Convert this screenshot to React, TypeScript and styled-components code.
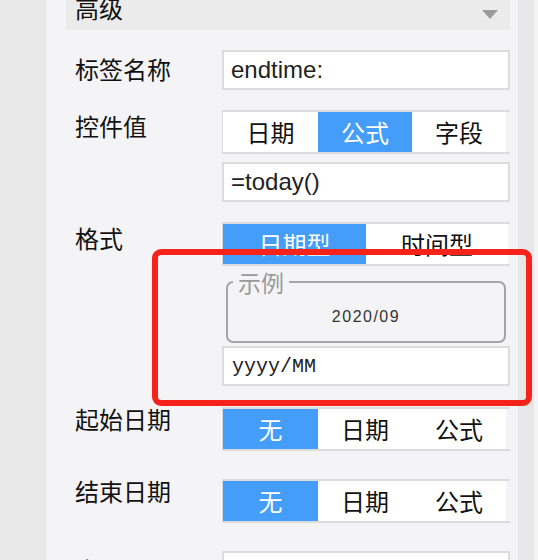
import React from "react";
import styled, { createGlobalStyle } from "styled-components";

const GlobalStyle = createGlobalStyle`
  html, body {
    margin: 0;
    padding: 0;
    background: #f3f3f3;
  }
  body {
    font-family: "Noto Sans CJK SC", "Noto Sans", sans-serif;
    overflow: hidden;
  }
`;

const Page = styled.div`
  position: relative;
  display: flex;
  width: 538px;
  height: 560px;
  overflow: hidden;
  background: #f3f3f3;
`;

const Gutter = styled.div`
  width: 46px;
  flex: none;
  background: #e9e9e9;
`;

const Panel = styled.div`
  width: 472px;
  flex: none;
  box-sizing: border-box;
  padding: 0 8px 0 20px;
  background: #f4f4f6;
  display: flex;
  flex-direction: column;
`;

const ScrollTrack = styled.div`
  width: 16px;
  flex: none;
  background: #e7e7e7;
`;

const SectionHeader = styled.div`
  flex: none;
  height: 44px;
  margin-top: -14px;
  box-sizing: border-box;
  padding: 0 12px 0 9px;
  background: #ebebeb;
  display: flex;
  align-items: center;
  justify-content: space-between;
`;

const SectionTitle = styled.span`
  font-size: 24px;
  line-height: 24px;
  color: #111;
`;

const Caret = styled.svg`
  align-self: flex-start;
  margin-top: 24px;
  flex: none;
`;

const Row = styled.div<{ $top: number }>`
  flex: none;
  display: flex;
  align-items: flex-start;
  margin-top: ${(p) => p.$top}px;
`;

const Label = styled.div<{ $offset: number }>`
  width: 156px;
  flex: none;
  box-sizing: border-box;
  padding-left: 9px;
  padding-top: ${(p) => p.$offset}px;
  font-size: 24px;
  line-height: 24px;
  color: #111;
  white-space: nowrap;
`;

const Field = styled.div`
  width: 288px;
  flex: none;
  display: flex;
  flex-direction: column;
`;

const Segment = styled.div<{ $cols: string }>`
  display: grid;
  grid-template-columns: ${(p) => p.$cols};
  height: 44px;
  box-sizing: border-box;
  border-top: 2px solid #dcdcdc;
  border-bottom: 2px solid #dcdcdc;
  border-left: 1px solid #dcdcdc;
`;

const SegButton = styled.button<{ $active: boolean }>`
  border: 0;
  margin: 0;
  padding: 0;
  font-family: "Noto Sans CJK SC", "Noto Sans", sans-serif;
  font-size: 24px;
  line-height: 24px;
  background: ${(p) => (p.$active ? "#449df8" : "#ffffff")};
  color: ${(p) => (p.$active ? "#ffffff" : "#111111")};
  display: flex;
  align-items: center;
  justify-content: center;
  cursor: pointer;
`;

const TextBox = styled.input<{ $mono?: boolean; $gap?: number }>`
  display: block;
  width: 288px;
  height: 40px;
  box-sizing: border-box;
  margin: ${(p) => p.$gap ?? 0}px 0 0;
  padding: 0 0 0 ${(p) => (p.$mono ? 8 : 7)}px;
  border: 2px solid #dcdcdc;
  border-radius: 0;
  background: #ffffff;
  outline: none;
  font-family: ${(p) =>
    p.$mono ? '"Liberation Mono", "Courier New", monospace' : '"Liberation Sans", Arial, sans-serif'};
  font-size: ${(p) => (p.$mono ? 20 : 24)}px;
  color: #222;
`;

const Example = styled.fieldset`
  margin: 3px 4px 0;
  padding: 0 5px 2px;
  border: 2px solid #a5a5a5;
  border-radius: 7px;
  min-width: 0;
`;

const ExampleLegend = styled.legend`
  padding: 0 5px;
  font-size: 23px;
  line-height: 26px;
  color: #9a9a9a;
`;

const ExampleValue = styled.div`
  height: 44px;
  display: flex;
  align-items: center;
  justify-content: center;
  font-family: "Liberation Sans", Arial, sans-serif;
  font-size: 16px;
  letter-spacing: 1.5px;
  color: #333;
`;

const Highlight = styled.div`
  position: absolute;
  left: 152px;
  top: 249px;
  width: 380px;
  height: 157px;
  box-sizing: border-box;
  border: 6px solid #f5231a;
  border-radius: 9px;
  pointer-events: none;
`;

type SegProps = { options: string[]; active: number; cols: string };

function SegmentControl({ options, active, cols }: SegProps) {
  return (
    <Segment $cols={cols}>
      {options.map((o, i) => (
        <SegButton key={o} $active={i === active} type="button">
          {o}
        </SegButton>
      ))}
    </Segment>
  );
}

const THREE = "95px 94px 94px";
const TWO = "143px 142px";

export default function App() {
  return (
    <>
      <GlobalStyle />
      <Page>
        <Gutter />
        <Panel>
          <SectionHeader>
            <SectionTitle>高级</SectionTitle>
            <Caret width="16" height="9" viewBox="0 0 16 9">
              <path d="M0 0 H16 L8 9 Z" fill="#9b9b9b" />
            </Caret>
          </SectionHeader>

          <Row $top={20}>
            <Label $offset={7}>标签名称</Label>
            <Field>
              <TextBox readOnly defaultValue="endtime:" />
            </Field>
          </Row>

          <Row $top={20}>
            <Label $offset={4}>控件值</Label>
            <Field>
              <SegmentControl options={["日期", "公式", "字段"]} active={1} cols={THREE} />
              <TextBox readOnly defaultValue="=today()" $gap={8} />
            </Field>
          </Row>

          <Row $top={20}>
            <Label $offset={4}>格式</Label>
            <Field>
              <SegmentControl options={["日期型", "时间型"]} active={0} cols={TWO} />
              <Example>
                <ExampleLegend>示例</ExampleLegend>
                <ExampleValue>2020/09</ExampleValue>
              </Example>
              <TextBox readOnly defaultValue="yyyy/MM" $mono $gap={3} />
            </Field>
          </Row>

          <Row $top={21}>
            <Label $offset={0}>起始日期</Label>
            <Field>
              <SegmentControl options={["无", "日期", "公式"]} active={0} cols={THREE} />
            </Field>
          </Row>

          <Row $top={28}>
            <Label $offset={0}>结束日期</Label>
            <Field>
              <SegmentControl options={["无", "日期", "公式"]} active={0} cols={THREE} />
            </Field>
          </Row>

          <Row $top={28}>
            <Label $offset={7}>水印</Label>
            <Field>
              <TextBox readOnly defaultValue="" />
            </Field>
          </Row>
        </Panel>
        <ScrollTrack />
        <Highlight />
      </Page>
    </>
  );
}
